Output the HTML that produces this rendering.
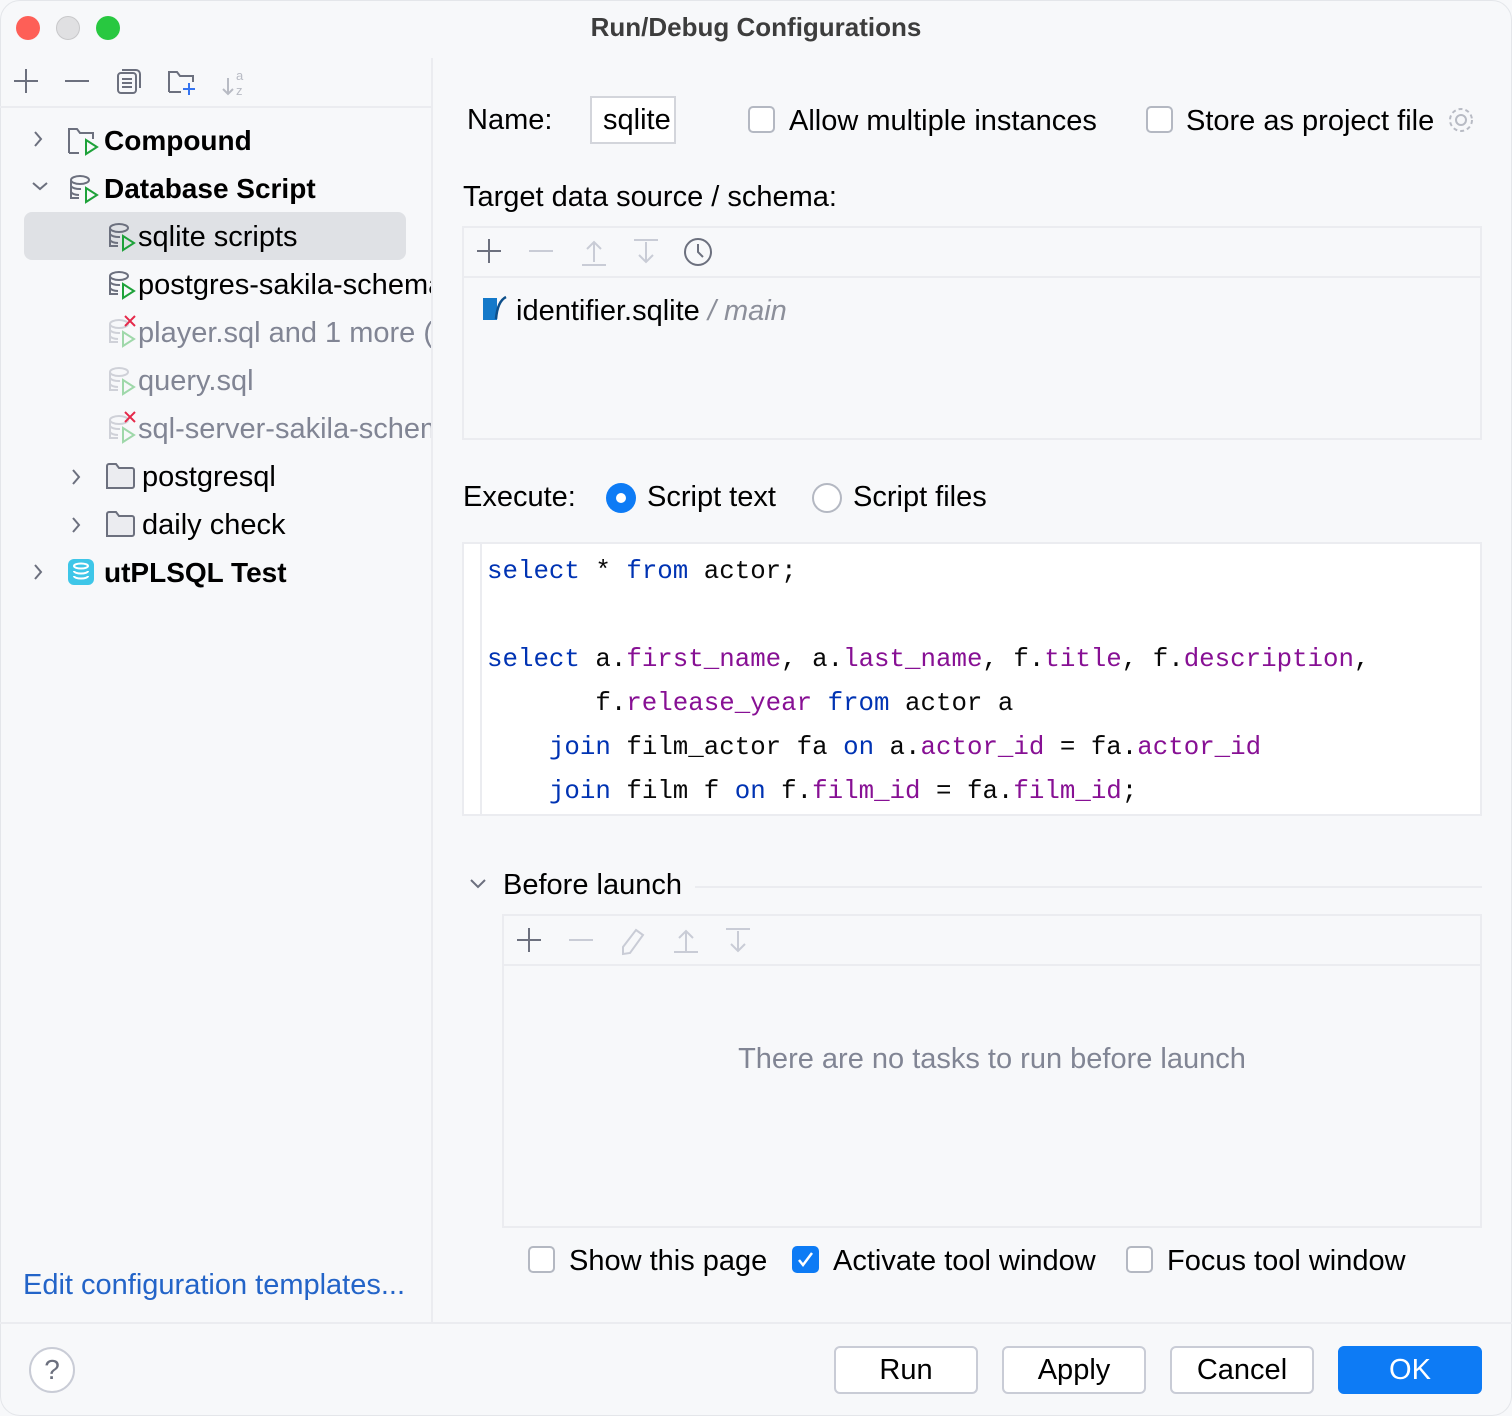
<!DOCTYPE html>
<html><head><meta charset="utf-8"><style>
*{margin:0;padding:0;box-sizing:border-box}
body{width:1512px;height:1416px;background:#f7f8fa;font-family:"Liberation Sans",sans-serif;color:#000;position:relative;overflow:hidden;font-size:29px}
.a{position:absolute;white-space:nowrap}
.b{font-weight:bold;font-size:28px}
.g{color:#818594}
.mono{font-family:"Liberation Mono",monospace;font-size:25.8px;color:#080808;white-space:pre}
.k{color:#0033b3}.f{color:#871094}
.cb{position:absolute;width:27px;height:27px;border:2px solid #b4b8c2;border-radius:5px;background:#fff}
.btn{position:absolute;top:1346px;height:48px;border:2px solid #c9ccd6;border-radius:6px;background:#fff;text-align:center;line-height:44px;font-size:29px}
svg{position:absolute;overflow:visible}
</style></head><body>
<div class="a" style="left:0;top:0;width:1512px;height:1416px;border-radius:20px;border:1px solid #e4e6ea"></div>
<div class="a" style="left:16px;top:16px;width:24px;height:24px;border-radius:50%;background:#fe5f57"></div>
<div class="a" style="left:56px;top:16px;width:24px;height:24px;border-radius:50%;background:#e0e0e2;border:1px solid #c8c8ca"></div>
<div class="a" style="left:96px;top:16px;width:24px;height:24px;border-radius:50%;background:#28c840"></div>
<div class="a" style="left:0;width:1512px;text-align:center;top:12px;font-size:26px;font-weight:bold;color:#3d3d3d">Run/Debug Configurations</div>

<!-- sidebar -->
<div class="a" style="left:431px;top:58px;width:2px;height:1264px;background:#ebecf0"></div>
<div class="a" style="left:0;top:106px;width:431px;height:2px;background:#ebecf0"></div>
<svg style="left:12px;top:68px" width="260" height="30" fill="none" stroke="#6c707e" stroke-width="2">
<path d="M2 13h24M14 1v24"/><path d="M53 13h24"/>
<rect x="106" y="5" width="18" height="20" rx="3"/><path d="M110 2h14a4 4 0 0 1 4 4v14M110 11h10M110 15h10M110 19h10"/>
<path d="M157 24V4h8l3 4h13v6M157 24h12"/><path d="M171 21h12M177 15v12" stroke="#3574f0"/>
<path d="M216 10v16M211 21l5 5 5-5" stroke="#b8bbc4"/><text x="224" y="12" font-size="13" fill="#b8bbc4" stroke="none" font-family="Liberation Sans">a</text><text x="224" y="27" font-size="13" fill="#b8bbc4" stroke="none" font-family="Liberation Sans">z</text>
</svg>
<div class="a" style="left:24px;top:212px;width:382px;height:48px;border-radius:8px;background:#dfe1e5"></div>
<svg style="left:32px;top:130px" width="14" height="460" fill="none" stroke="#6c707e" stroke-width="2"><path d="M3 2l6 7-6 7"/><path d="M1 53l7 6 7-6"/><path d="M3 435l6 7-6 7"/><path d="M41 340l6 7-6 7"/><path d="M41 388l6 7-6 7"/></svg>
<svg style="left:0;top:0" width="440" height="600" fill="none" stroke-width="2">
<path d="M69 153V129h8l3 4h13v6M69 153h10" stroke="#6c707e"/><path d="M86 140l11 7-11 7z" stroke="#1ea23a"/>
<g stroke="#6c707e"><ellipse cx="80" cy="180" rx="9" ry="4"/><path d="M71 180v18h8M71 186a9 4 0 0 0 10 3M71 192a9 4 0 0 0 8 3"/></g><path d="M86 188l11 7-11 7z" stroke="#1ea23a"/>
<g stroke="#6c707e"><ellipse cx="119" cy="228" rx="9" ry="4"/><path d="M110 228v18h8M110 234a9 4 0 0 0 10 3M110 240a9 4 0 0 0 8 3"/></g><path d="M123 236l11 7-11 7z" stroke="#1ea23a"/>
<g stroke="#6c707e"><ellipse cx="119" cy="276" rx="9" ry="4"/><path d="M110 276v18h8M110 282a9 4 0 0 0 10 3M110 288a9 4 0 0 0 8 3"/></g><path d="M123 284l11 7-11 7z" stroke="#1ea23a"/>
<g stroke="#cfd1d8"><ellipse cx="119" cy="324" rx="9" ry="4"/><path d="M110 324v18h8M110 330a9 4 0 0 0 10 3M110 336a9 4 0 0 0 8 3"/></g><path d="M123 332l11 7-11 7z" stroke="#9fd8aa"/><path d="M125 316l10 10M135 316l-10 10" stroke="#e5294a"/>
<g stroke="#cfd1d8"><ellipse cx="119" cy="372" rx="9" ry="4"/><path d="M110 372v18h8M110 378a9 4 0 0 0 10 3M110 384a9 4 0 0 0 8 3"/></g><path d="M123 380l11 7-11 7z" stroke="#9fd8aa"/>
<g stroke="#cfd1d8"><ellipse cx="119" cy="420" rx="9" ry="4"/><path d="M110 420v18h8M110 426a9 4 0 0 0 10 3M110 432a9 4 0 0 0 8 3"/></g><path d="M123 428l11 7-11 7z" stroke="#9fd8aa"/><path d="M125 412l10 10M135 412l-10 10" stroke="#e5294a"/>
<path d="M107 488V466a2 2 0 0 1 2-2h7l3 4h13a2 2 0 0 1 2 2v16a2 2 0 0 1-2 2z" stroke="#6c707e" fill="#ebecf0"/>
<path d="M107 536V514a2 2 0 0 1 2-2h7l3 4h13a2 2 0 0 1 2 2v16a2 2 0 0 1-2 2z" stroke="#6c707e" fill="#ebecf0"/>
<rect x="68" y="559" width="26" height="26" rx="6" fill="#3ec6e8" stroke="none"/><g stroke="#fff"><ellipse cx="81" cy="566" rx="7" ry="2.5"/><path d="M74 571a7 2.5 0 0 0 14 0M74 576a7 2.5 0 0 0 14 0"/></g>
</svg>
<div class="a b" style="left:104px;top:125px">Compound</div>
<div class="a b" style="left:104px;top:173px">Database Script</div>
<div class="a" style="left:138px;top:221px">sqlite scripts</div>
<div class="a" style="left:138px;top:269px;width:293px;overflow:hidden">postgres-sakila-schema</div>
<div class="a g" style="left:138px;top:317px;width:293px;overflow:hidden">player.sql and 1 more (</div>
<div class="a g" style="left:138px;top:365px">query.sql</div>
<div class="a g" style="left:138px;top:413px;width:293px;overflow:hidden">sql-server-sakila-schema</div>
<div class="a" style="left:142px;top:461px">postgresql</div>
<div class="a" style="left:142px;top:509px">daily check</div>
<div class="a b" style="left:104px;top:557px">utPLSQL Test</div>
<div class="a" style="left:23px;top:1269px;color:#2364c8">Edit configuration templates...</div>

<!-- main -->
<div class="a" style="left:467px;top:104px">Name:</div>
<div class="a" style="left:590px;top:96px;width:86px;height:48px;border:2px solid #d3d5db;background:#fff;overflow:hidden;padding:6px 11px">sqlite</div>
<div class="cb" style="left:748px;top:106px"></div><div class="a" style="left:789px;top:105px">Allow multiple instances</div>
<div class="cb" style="left:1146px;top:106px"></div><div class="a" style="left:1186px;top:105px">Store as project file</div>
<svg style="left:1447px;top:106px" width="30" height="30" fill="none" stroke="#b8bbc4" stroke-width="2"><circle cx="14" cy="14" r="5"/><circle cx="14" cy="14" r="11" stroke-dasharray="4 3"/></svg>
<div class="a" style="left:463px;top:181px">Target data source / schema:</div>
<div class="a" style="left:462px;top:226px;width:1020px;height:214px;border:2px solid #ebecf0"></div>
<div class="a" style="left:464px;top:276px;width:1016px;height:2px;background:#ebecf0"></div>
<svg style="left:476px;top:238px" width="240" height="30" fill="none" stroke-width="2"><path d="M1 13h24M13 1v24" stroke="#6c707e"/><path d="M53 13h24" stroke="#c9ccd6"/><path d="M118 24V4M111 11l7-7 7 7M106 27h24" stroke="#c9ccd6"/><path d="M170 4v20M163 17l7 7 7-7M158 2h24" stroke="#c9ccd6"/><circle cx="222" cy="14" r="13" stroke="#6c707e"/><path d="M222 6v8l5 5" stroke="#6c707e"/></svg>
<svg style="left:482px;top:296px" width="26" height="28"><path d="M1 2h14v22H1z" fill="#1479c9"/><path d="M24 1c-6 3-9 10-10 22" stroke="#0d4f8a" stroke-width="2.5" fill="none"/></svg>
<div class="a" style="left:516px;top:295px">identifier.sqlite <span style="color:#8c8f9a;font-style:italic">/ main</span></div>
<div class="a" style="left:463px;top:481px">Execute:</div>
<div class="a" style="left:606px;top:483px;width:30px;height:30px;border-radius:50%;background:#0d7bf5"></div><div class="a" style="left:616px;top:493px;width:10px;height:10px;border-radius:50%;background:#fff"></div>
<div class="a" style="left:647px;top:481px">Script text</div>
<div class="a" style="left:812px;top:483px;width:30px;height:30px;border-radius:50%;border:2px solid #b4b8c2;background:#fff"></div>
<div class="a" style="left:853px;top:481px">Script files</div>
<div class="a" style="left:462px;top:542px;width:1020px;height:274px;border:2px solid #ebecf0;background:#fff"></div>
<div class="a" style="left:480px;top:544px;width:2px;height:270px;background:#ebecf0"></div>
<div class="a mono" style="left:487px;top:550px;line-height:44px"><span class="k">select</span> * <span class="k">from</span> actor;

<span class="k">select</span> a.<span class="f">first_name</span>, a.<span class="f">last_name</span>, f.<span class="f">title</span>, f.<span class="f">description</span>,
       f.<span class="f">release_year</span> <span class="k">from</span> actor a
    <span class="k">join</span> film_actor fa <span class="k">on</span> a.<span class="f">actor_id</span> = fa.<span class="f">actor_id</span>
    <span class="k">join</span> film f <span class="k">on</span> f.<span class="f">film_id</span> = fa.<span class="f">film_id</span>;</div>
<svg style="left:470px;top:878px" width="16" height="12" fill="none" stroke="#6c707e" stroke-width="2"><path d="M1 2l7 7 7-7"/></svg>
<div class="a" style="left:503px;top:869px">Before launch</div>
<div class="a" style="left:695px;top:886px;width:787px;height:2px;background:#ebecf0"></div>
<div class="a" style="left:502px;top:914px;width:980px;height:314px;border:2px solid #ebecf0"></div>
<div class="a" style="left:504px;top:964px;width:976px;height:2px;background:#ebecf0"></div>
<svg style="left:516px;top:927px" width="240" height="30" fill="none" stroke-width="2"><path d="M1 13h24M13 1v24" stroke="#6c707e"/><path d="M53 13h24" stroke="#c9ccd6"/><path d="M120 3l7 5-13 18-7 1 0-7z" stroke="#c9ccd6"/><path d="M170 24V4M163 11l7-7 7 7M158 25h24" stroke="#c9ccd6"/><path d="M222 4v20M215 17l7 7 7-7M210 2h24" stroke="#c9ccd6"/></svg>
<div class="a" style="left:502px;width:980px;text-align:center;top:1043px;color:#818594">There are no tasks to run before launch</div>
<div class="cb" style="left:528px;top:1246px"></div><div class="a" style="left:569px;top:1245px">Show this page</div>
<div class="cb" style="left:792px;top:1246px;background:#0d7bf5;border-color:#0d7bf5"></div>
<svg style="left:797px;top:1251px" width="18" height="18" fill="none" stroke="#fff" stroke-width="2.5"><path d="M2 9l4 5 9-12"/></svg>
<div class="a" style="left:833px;top:1245px">Activate tool window</div>
<div class="cb" style="left:1126px;top:1246px"></div><div class="a" style="left:1167px;top:1245px">Focus tool window</div>

<!-- bottom -->
<div class="a" style="left:0;top:1322px;width:1512px;height:2px;background:#ebecf0"></div>
<div class="a" style="left:29px;top:1347px;width:46px;height:46px;border-radius:50%;border:2px solid #c9ccd6;background:#fff;text-align:center;line-height:42px;color:#6c707e;font-size:28px">?</div>
<div class="btn" style="left:834px;width:144px">Run</div>
<div class="btn" style="left:1002px;width:144px">Apply</div>
<div class="btn" style="left:1170px;width:144px">Cancel</div>
<div class="btn" style="left:1338px;width:144px;background:#0d7bf5;border-color:#0d7bf5;color:#fff">OK</div>
</body></html>
